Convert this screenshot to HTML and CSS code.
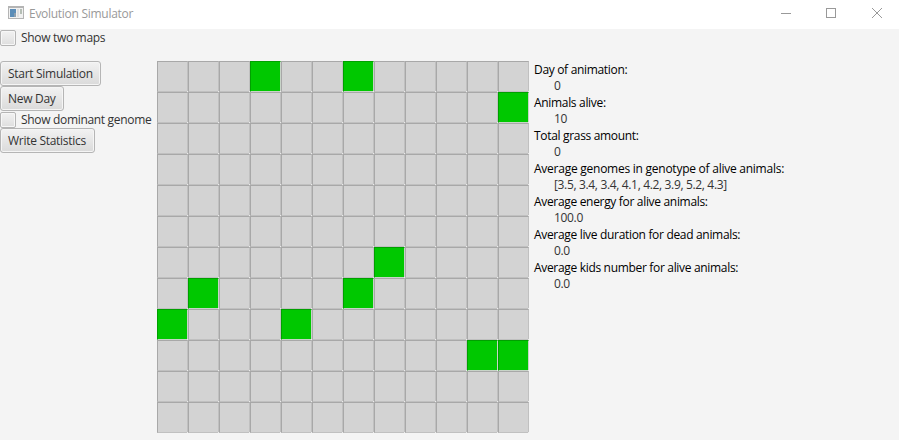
FILE: index.html
```html
<!DOCTYPE html>
<html lang="en">
<head>
<meta charset="utf-8">
<title>Evolution Simulator</title>
<link rel="stylesheet" href="styles.css">
</head>
<body>
<header class="titlebar">
  <svg class="app-icon" width="16" height="13" viewBox="0 0 16 13" shape-rendering="crispEdges"><rect width="16" height="13" fill="#b4b4b4"/><rect x="1" y="2" width="14" height="10" fill="#f1f1f1"/><rect x="2" y="3" width="6" height="8" fill="#5b8db8"/><rect x="6" y="7" width="2" height="4" fill="#8d9fae"/><rect x="9" y="3" width="2" height="8" fill="#dedede"/><rect x="12" y="3" width="2" height="5" fill="#b5beb5"/></svg>
  <span class="title">Evolution Simulator</span>
  <svg class="controls" width="104" height="12" viewBox="0 0 104 12" fill="none" stroke="#999"><path d="M0 5.5H10"/><rect x="45.5" y=".5" width="9" height="9"/><path d="M91 0l10 10M101 0l-10 10"/></svg>
</header>
<label class="check"><i class="box"></i><span>Show two maps</span></label>
<main>
  <div class="actions">
    <button class="start">Start Simulation</button>
    <button class="day">New Day</button>
    <label class="check"><i class="box"></i><span>Show dominant genome</span></label>
    <button class="write">Write Statistics</button>
  </div>
  <div class="map" id="map"></div>
  <dl class="stats">
    <dt>Day of animation:</dt><dd>0</dd>
    <dt>Animals alive:</dt><dd>10</dd>
    <dt>Total grass amount:</dt><dd>0</dd>
    <dt class="genomes">Average genomes in genotype of alive animals:</dt><dd>[3.5, 3.4, 3.4, 4.1, 4.2, 3.9, 5.2, 4.3]</dd>
    <dt>Average energy for alive animals:</dt><dd>100.0</dd>
    <dt>Average live duration for dead animals:</dt><dd>0.0</dd>
    <dt>Average kids number for alive animals:</dt><dd>0.0</dd>
  </dl>
</main>
<script src="map.js"></script>
</body>
</html>
```
FILE: map.js
```js
const animals = new Set(["3,0", "6,0", "11,1", "7,6", "1,7", "6,7", "0,8", "4,8", "10,9", "11,9"]);
const map = document.getElementById("map");
for (let y = 0; y < 12; y++) {
  for (let x = 0; x < 12; x++) {
    const cell = document.createElement("div");
    cell.className = animals.has(x + "," + y) ? "cell animal" : "cell";
    map.append(cell);
  }
}
```
FILE: styles.css
```css
* { box-sizing: border-box; }
body { margin: 0; height: 440px; overflow: hidden; background: #f4f4f4; color: #333; font: 12px/16px "Open Sans", "Noto Sans", sans-serif; letter-spacing: -0.32px; white-space: nowrap; }
.titlebar { display: flex; height: 29px; padding: 0 14px 0 8px; background: #fff; color: #999; }
.app-icon { margin-top: 6px; }
.title { margin: 6px 0 0 5px; letter-spacing: -0.28px; }
.controls { margin: 8px 0 0 auto; }
.check { display: flex; height: 18px; align-items: center; gap: 5px; }
.box { width: 16px; height: 16px; border: 1px solid #b5b5b5; border-radius: 2px; background: linear-gradient(#f2f2f2, #dedede); box-shadow: inset 0 0 0 1px #f7f7f7; }
main { display: flex; margin-top: 14px; }
.actions { width: 157px; display: flex; flex-direction: column; align-items: flex-start; }
button { height: 25px; padding: 0 0 0 7px; border: 1px solid #b5b5b5; border-radius: 3px; background: linear-gradient(#f2f2f2, #dadada); box-shadow: inset 0 0 0 1px #f5f5f5; color: #333; font: inherit; letter-spacing: -0.29px; text-align: left; }
.start { width: 101px; }
.day { width: 64px; }
.write { width: 95px; }
.actions .check { height: 17px; }
.map { display: grid; grid-template-columns: repeat(12, 31px); grid-auto-rows: 31px; }
.cell { position: relative; border: 1px solid; border-color: #a8a8a8 #c0c0c0 #c0c0c0 #a8a8a8; background: #d3d3d3; }
.cell::after { content: ""; position: absolute; right: -1px; bottom: -1px; width: 1px; height: 1px; background: #ececec; }
.animal { border-color: #00a000 #c8d4c8 #c8d4c8 #00a000; background: #00c800; }
.stats { margin: 1px 0 0 5px; color: #000; }
.stats dt { height: 16px; }
.stats .genomes { letter-spacing: -0.25px; }
.stats dd { height: 17px; margin: 0 0 0 20px; line-height: 15px; color: #333; letter-spacing: -0.34px; }
```
